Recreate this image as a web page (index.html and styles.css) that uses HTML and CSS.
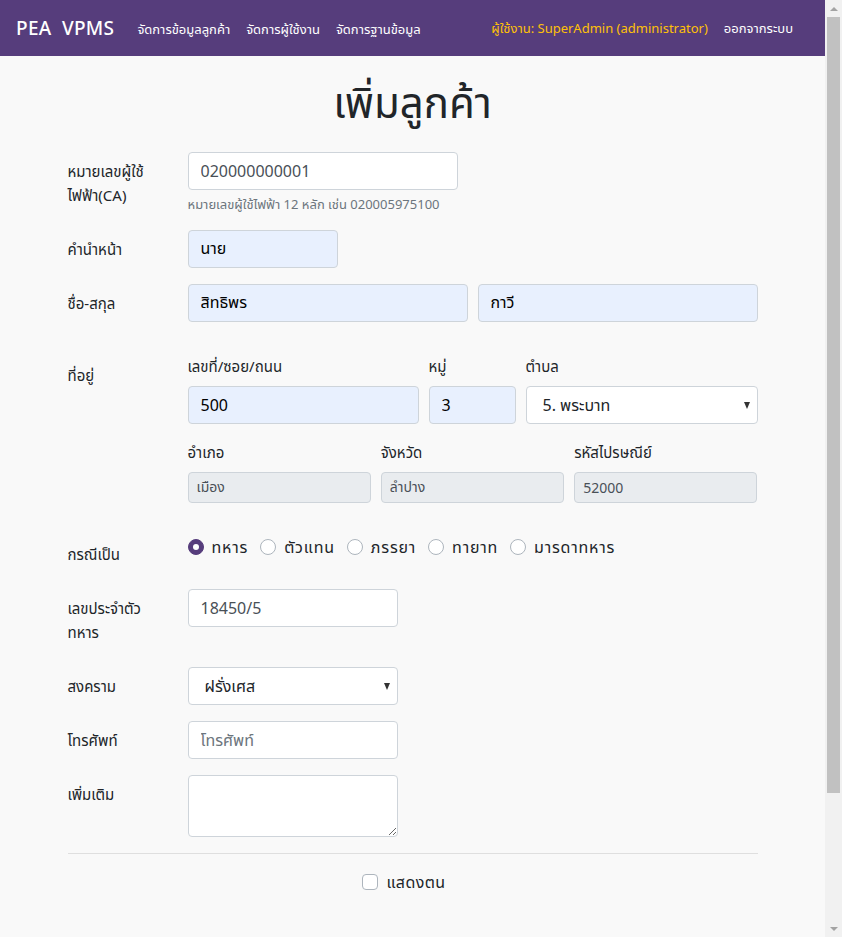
FILE: index.html
```html
<!DOCTYPE html>
<html lang="th">
<head>
<meta charset="utf-8">
<title>PEA VPMS - เพิ่มลูกค้า</title>
<link rel="stylesheet" href="styles.css">
</head>
<body>
<div class="page">
  <nav class="navbar">
    <a class="brand" href="#">PEA&nbsp; VPMS</a>
    <ul class="nav-left">
      <li><a href="#">จัดการข้อมูลลูกค้า</a></li>
      <li><a href="#">จัดการผู้ใช้งาน</a></li>
      <li><a href="#">จัดการฐานข้อมูล</a></li>
    </ul>
    <div class="nav-right">
      <span class="user">ผู้ใช้งาน: SuperAdmin (administrator)</span>
      <a href="#">ออกจากระบบ</a>
    </div>
  </nav>

  <main class="container">
    <h1 class="title">เพิ่มลูกค้า</h1>
    <form class="form">
      <div class="row">
        <label class="col-label">หมายเลขผู้ใช้<br>ไฟฟ้า(CA)</label>
        <div class="col-field">
          <input class="control w-270" type="text" value="020000000001">
          <small class="help">หมายเลขผู้ใช้ไฟฟ้า 12 หลัก เช่น 020005975100</small>
        </div>
      </div>

      <div class="row">
        <label class="col-label">คำนำหน้า</label>
        <div class="col-field">
          <input class="control autofill w-150" type="text" value="นาย">
        </div>
      </div>

      <div class="row">
        <label class="col-label">ชื่อ-สกุล</label>
        <div class="col-field pair">
          <input class="control autofill" type="text" value="สิทธิพร">
          <input class="control autofill" type="text" value="กาวี">
        </div>
      </div>

      <div class="row address-row">
        <label class="col-label addr-label">ที่อยู่</label>
        <div class="col-field">
          <div class="addr-grid top">
            <div class="sub">
              <label class="sub-label">เลขที่/ซอย/ถนน</label>
              <input class="control autofill" type="text" value="500">
            </div>
            <div class="sub">
              <label class="sub-label">หมู่</label>
              <input class="control autofill" type="text" value="3">
            </div>
            <div class="sub">
              <label class="sub-label">ตำบล</label>
              <div class="select-wrap">
                <select class="control select"><option>5. พระบาท</option></select>
              </div>
            </div>
          </div>
          <div class="addr-grid bottom">
            <div class="sub">
              <label class="sub-label">อำเภอ</label>
              <input class="control sm" type="text" value="เมือง" readonly>
            </div>
            <div class="sub">
              <label class="sub-label">จังหวัด</label>
              <input class="control sm" type="text" value="ลำปาง" readonly>
            </div>
            <div class="sub">
              <label class="sub-label">รหัสไปรษณีย์</label>
              <input class="control sm" type="text" value="52000" readonly>
            </div>
          </div>
        </div>
      </div>

      <div class="row radio-row">
        <label class="col-label">กรณีเป็น</label>
        <div class="col-field radios">
          <label class="radio"><span class="dot checked"></span>ทหาร</label>
          <label class="radio"><span class="dot"></span>ตัวแทน</label>
          <label class="radio"><span class="dot"></span>ภรรยา</label>
          <label class="radio"><span class="dot"></span>ทายาท</label>
          <label class="radio"><span class="dot"></span>มารดาทหาร</label>
        </div>
      </div>

      <div class="row">
        <label class="col-label">เลขประจำตัว<br>ทหาร</label>
        <div class="col-field">
          <input class="control w-210" type="text" value="18450/5">
        </div>
      </div>

      <div class="row">
        <label class="col-label">สงคราม</label>
        <div class="col-field">
          <div class="select-wrap w-210">
            <select class="control select"><option>ฝรั่งเศส</option></select>
          </div>
        </div>
      </div>

      <div class="row">
        <label class="col-label">โทรศัพท์</label>
        <div class="col-field">
          <input class="control w-210" type="text" placeholder="โทรศัพท์">
        </div>
      </div>

      <div class="row">
        <label class="col-label">เพิ่มเติม</label>
        <div class="col-field">
          <textarea class="control textarea w-210"></textarea>
        </div>
      </div>

      <hr class="divider">

      <div class="check-row">
        <label class="check"><span class="box"></span>แสดงตน</label>
      </div>
    </form>
  </main>
</div>

<div class="scrollbar" aria-hidden="true">
  <div class="sb-btn"><span class="tri-up"></span></div>
  <div class="sb-track">
    <div class="sb-thumb"></div>
  </div>
  <div class="sb-btn"><span class="tri-down"></span></div>
</div>
</body>
</html>
```

FILE: styles.css
```css
* { box-sizing: border-box; }

html, body {
  margin: 0;
  padding: 0;
  height: 100%;
  overflow: hidden;
}

body {
  display: flex;
  background: #f9f9f9;
  color: #212529;
  font-family: "Noto Sans", "Noto Sans Thai", "DejaVu Sans", sans-serif;
  font-size: 16px;
  line-height: 24px;
}

.page {
  flex: 1;
  min-width: 0;
  height: 100%;
  overflow: hidden;
}

/* fake classic scrollbar */
.scrollbar {
  width: 17px;
  flex: none;
  height: 100%;
  background: #f1f1f1;
  display: flex;
  flex-direction: column;
}
.sb-btn {
  height: 17px;
  display: flex;
  align-items: center;
  justify-content: center;
}
.tri-up, .tri-down {
  width: 0;
  height: 0;
  border-left: 4px solid transparent;
  border-right: 4px solid transparent;
}
.tri-up { border-bottom: 4px solid #a3a3a3; }
.tri-down { border-top: 4px solid #a3a3a3; }
.sb-track {
  flex: 1;
  padding: 0 2px;
}
.sb-thumb {
  height: 776px;
  background: #c1c1c1;
}

/* navbar */
.navbar {
  height: 56px;
  background: #563d7c;
  display: flex;
  align-items: center;
  padding: 0 16px;
}
.brand {
  color: #fff;
  text-decoration: none;
  font-size: 19px;
  font-weight: 500;
  letter-spacing: 0.3px;
  margin-right: 23px;
}
.nav-left {
  list-style: none;
  display: flex;
  gap: 16px;
  margin: 0;
  padding: 0;
}
.nav-left a, .nav-right a {
  color: #fff;
  text-decoration: none;
  font-size: 13px;
}
.nav-right {
  margin-left: auto;
  display: flex;
  align-items: center;
  gap: 16px;
  margin-right: 16px;
  font-size: 13px;
}
.user { color: #ffc107; }

/* container */
.container {
  width: 720px;
  margin: 0 auto;
  padding: 0 15px;
}
.title {
  text-align: center;
  font-size: 42px;
  font-weight: 400;
  line-height: 48px;
  margin: 22px 0 26px;
}

.row {
  display: flex;
  margin-bottom: 16px;
}
.col-label {
  width: 120px;
  flex: none;
  padding: 7px 30px 7px 0;
  font-size: 15px;
}
.col-field {
  flex: 1;
  display: flex;
  flex-direction: column;
}

.control {
  display: block;
  height: 38px;
  padding: 6px 12px;
  font-family: inherit;
  font-size: 16px;
  line-height: 24px;
  color: #495057;
  background: #fff;
  border: 1px solid #ced4da;
  border-radius: 4px;
  width: 100%;
}
.control::placeholder { color: #6c757d; }
.control.autofill { background: #e8f0fe; color: #000; }
.control.sm {
  height: 31px;
  padding: 4px 8px;
  font-size: 14px;
  line-height: 21px;
  background: #e9ecef;
}
.w-270 { width: 270px; }
.w-150 { width: 150px; }
.w-210 { width: 210px; }

.help {
  margin-top: 4px;
  font-size: 13px;
  line-height: 20px;
  color: #6c757d;
}

.pair {
  flex-direction: row;
  gap: 10px;
}

/* address */
.address-row { margin-top: 32px; }
.addr-label { padding-top: 9px; }
.addr-grid {
  display: grid;
  gap: 10px;
}
.addr-grid.top { grid-template-columns: 231px 87px 1fr; }
.addr-grid.bottom { grid-template-columns: 1fr 1fr 1fr; margin-top: 16px; }
.sub { display: flex; flex-direction: column; }
.sub-label {
  margin-bottom: 8px;
  font-size: 15px;
}

.select-wrap {
  position: relative;
}
.select-wrap::after {
  content: "";
  position: absolute;
  right: 8px;
  top: 16px;
  border-left: 3.5px solid transparent;
  border-right: 3.5px solid transparent;
  border-top: 7px solid #333;
  pointer-events: none;
}
.select {
  appearance: none;
  -webkit-appearance: none;
  padding-left: 16px;
  color: #212529;
}

/* radios */
.radio-row { margin-top: 32px; }
.radios {
  flex-direction: row;
  align-items: center;
  height: 24px;
}
.radio {
  display: flex;
  align-items: center;
  margin-right: 12px;
  font-size: 16px;
  letter-spacing: 0.8px;
}
.dot {
  width: 16px;
  height: 16px;
  border-radius: 50%;
  border: 1px solid #adb5bd;
  background: #fff;
  margin-right: 8px;
  position: relative;
}
.dot.checked {
  background: #563d7c;
  border-color: #563d7c;
}
.dot.checked::after {
  content: "";
  position: absolute;
  width: 6px;
  height: 6px;
  border-radius: 50%;
  background: #fff;
  left: 4px;
  top: 4px;
}

.textarea {
  height: 62px;
  resize: vertical;
}

.divider {
  border: 0;
  border-top: 1px solid rgba(0,0,0,.1);
  margin: 16px 0;
}

.check-row {
  display: flex;
  justify-content: center;
  padding-right: 18px;
}
.check {
  display: flex;
  align-items: center;
  font-size: 16px;
  letter-spacing: 0.4px;
}
.box {
  width: 16px;
  height: 16px;
  border: 1px solid #adb5bd;
  border-radius: 4px;
  background: #fff;
  margin-right: 9px;
}
```
